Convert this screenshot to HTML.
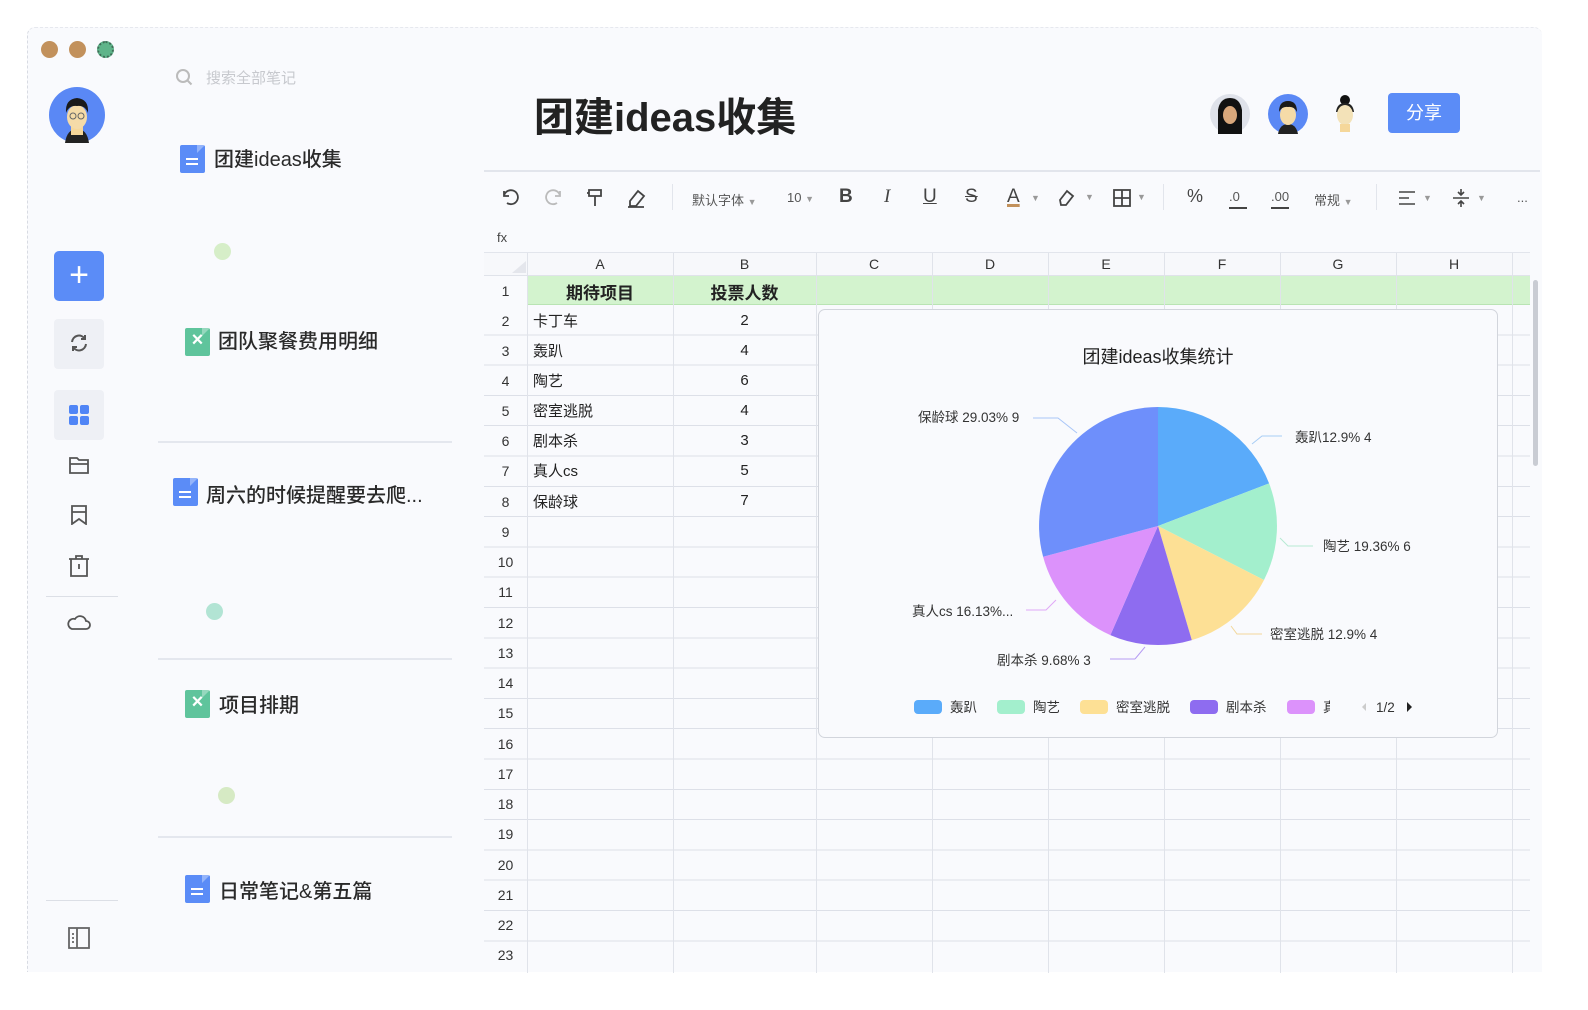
<!DOCTYPE html>
<html><head><meta charset="utf-8"><style>
*{margin:0;padding:0;box-sizing:border-box}
body{width:1588px;height:1010px;background:#fff;font-family:"Liberation Sans","Noto Sans CJK SC",sans-serif;color:#222;position:relative;overflow:hidden}
.win{position:absolute;left:27px;top:27px;width:1515px;height:945px;background:#f9fafd;border-left:1px dashed #d8dbe2;border-top:1px dashed #e6e8ee;border-radius:8px 8px 0 0}
.a{position:absolute}
.dot{position:absolute;width:17px;height:17px;border-radius:50%}
.note{position:absolute;font-size:20px;color:#2a2a2a;font-weight:500;white-space:nowrap}
.sep{position:absolute;left:158px;width:294px;height:2px;background:#e4e7ee}
.ic{position:absolute;width:25px;height:28px;border-radius:2px}
.ic .f{position:absolute;right:0;top:0;width:0;height:0;border-left:8px solid rgba(255,255,255,.35);border-bottom:8px solid transparent}
.cell{position:absolute;font-size:15px;color:#222;white-space:nowrap}
.rn{position:absolute;left:484px;width:43px;text-align:center;font-size:14px;color:#333}
.ch{position:absolute;top:256px;font-size:14px;color:#333;text-align:center}
.tb{position:absolute;top:186px;font-size:19px;color:#444}
.small{font-size:13px;color:#555}
</style></head><body>
<div class="win"></div>
<div class="dot" style="left:41px;top:41px;background:#c2915c"></div>
<div class="dot" style="left:69px;top:41px;background:#c2915c"></div>
<div class="dot" style="left:97px;top:41px;background:#5fb48a;border:2px dotted #3e6d57"></div>
<svg class="a" style="left:49px;top:87px" width="56" height="56" viewBox="0 0 56 56"><circle cx="28" cy="28" r="28" fill="#5a88f5"/><path d="M16 56 Q18 42 28 42 Q38 42 40 56Z" fill="#222"/><rect x="22" y="38" width="12" height="10" fill="#f5d79a"/><ellipse cx="28" cy="30" rx="10" ry="12" fill="#f5dba8"/><path d="M17 26 Q16 12 28 11 Q40 12 39 26 Q36 18 28 19 Q20 18 17 26Z" fill="#1a1a1a"/><circle cx="24" cy="29" r="3" fill="none" stroke="#666"/><circle cx="32" cy="29" r="3" fill="none" stroke="#666"/></svg>
<div class="a" style="left:54px;top:251px;width:50px;height:50px;background:#5b8cf7;border-radius:5px;color:#fff;font-size:34px;line-height:48px;text-align:center;font-weight:300">+</div>
<div class="a" style="left:54px;top:319px;width:50px;height:50px;background:#eef0f5;border-radius:4px"></div>
<svg class="a" style="left:68px;top:332px" width="22" height="22" viewBox="0 0 22 22" fill="none" stroke="#555" stroke-width="2"><path d="M4 10 A7 7 0 0 1 17 7 M18 12 A7 7 0 0 1 5 15"/><path d="M17 3 v4 h-4 M5 19 v-4 h4"/></svg>
<div class="a" style="left:54px;top:390px;width:50px;height:50px;background:#eef0f5;border-radius:4px"></div>
<svg class="a" style="left:69px;top:405px" width="20" height="20"><rect x="0" y="0" width="9" height="9" rx="2" fill="#4f85f6"/><rect x="11" y="0" width="9" height="9" rx="2" fill="#4f85f6"/><rect x="0" y="11" width="9" height="9" rx="2" fill="#4f85f6"/><rect x="11" y="11" width="9" height="9" rx="2" fill="#4f85f6"/></svg>
<svg class="a" style="left:69px;top:456px" width="20" height="18" fill="none" stroke="#555" stroke-width="1.8"><path d="M1 2 h7 l2 2 h9 v13 h-18z M1 8 h18"/></svg>
<svg class="a" style="left:71px;top:505px" width="16" height="20" fill="none" stroke="#555" stroke-width="1.8"><path d="M1 1 h14 v18 l-7 -5 l-7 5z M1 7 h14"/></svg>
<svg class="a" style="left:68px;top:555px" width="22" height="22" fill="none" stroke="#555" stroke-width="1.8"><path d="M1 4 h20 M8 4 v-3 h6 v3 M3 4 v17 h16 v-17 M11 9 v5"/></svg>
<div class="a" style="left:46px;top:596px;width:72px;height:1px;background:#dcdfe6"></div>
<svg class="a" style="left:67px;top:613px" width="24" height="18" fill="none" stroke="#555" stroke-width="1.8"><path d="M5 16 h14 a4 4 0 0 0 0 -8 a6 6 0 0 0 -11 -2 a5 5 0 0 0 -3 10z"/></svg>
<div class="a" style="left:46px;top:900px;width:72px;height:1px;background:#dcdfe6"></div>
<svg class="a" style="left:68px;top:927px" width="22" height="22" fill="none" stroke="#666" stroke-width="1.8"><rect x="1" y="1" width="20" height="20"/><path d="M9 1 v20 M4 7 h2 M4 11 h2 M4 15 h2"/></svg>
<svg class="a" style="left:176px;top:69px" width="17" height="17" fill="none" stroke="#bbb" stroke-width="2"><circle cx="7" cy="7" r="6"/><path d="M11.5 11.5 l4 4"/></svg>
<div class="a" style="left:206px;top:67px;font-size:15px;color:#c7c9ce">搜索全部笔记</div>
<div class="ic" style="left:180px;top:145px;background:#5b8cf7"><div class="f"></div><div class="a" style="left:6px;top:13px;width:12px;height:2px;background:#fff"></div><div class="a" style="left:6px;top:18px;width:12px;height:2px;background:#fff"></div></div>
<div class="note" style="left:214px;top:143px">团建ideas收集</div>
<div class="dot" style="left:214px;top:243px;background:#d6eec8"></div>
<div class="ic" style="left:185px;top:328px;background:#5fc49c"><div class="f"></div><div class="a" style="left:0;top:1px;width:25px;text-align:center;color:#fff;font-size:20px;font-weight:bold">×</div></div>
<div class="note" style="left:218px;top:325px">团队聚餐费用明细</div>
<div class="sep" style="top:441px"></div>
<div class="ic" style="left:173px;top:478px;background:#5b8cf7"><div class="f"></div><div class="a" style="left:6px;top:13px;width:12px;height:2px;background:#fff"></div><div class="a" style="left:6px;top:18px;width:12px;height:2px;background:#fff"></div></div>
<div class="note" style="left:206px;top:479px">周六的时候提醒要去爬...</div>
<div class="dot" style="left:206px;top:603px;background:#b2e4d4"></div>
<div class="sep" style="top:658px"></div>
<div class="ic" style="left:185px;top:690px;background:#5fc49c"><div class="f"></div><div class="a" style="left:0;top:1px;width:25px;text-align:center;color:#fff;font-size:20px;font-weight:bold">×</div></div>
<div class="note" style="left:219px;top:689px">项目排期</div>
<div class="dot" style="left:218px;top:787px;background:#d6eac4"></div>
<div class="sep" style="top:836px"></div>
<div class="ic" style="left:185px;top:875px;background:#5b8cf7"><div class="f"></div><div class="a" style="left:6px;top:13px;width:12px;height:2px;background:#fff"></div><div class="a" style="left:6px;top:18px;width:12px;height:2px;background:#fff"></div></div>
<div class="note" style="left:219px;top:875px">日常笔记&amp;第五篇</div>
<div class="a" style="left:534px;top:85px;font-size:40px;font-weight:bold;color:#222">团建ideas收集</div>
<svg class="a" style="left:1210px;top:94px" width="40" height="40"><circle cx="20" cy="20" r="20" fill="#dfe2ea"/><path d="M8 40 V16 Q10 4 20 4 Q30 4 32 16 V40z" fill="#111"/><ellipse cx="20" cy="21" rx="7" ry="9" fill="#d9a77b"/></svg>
<svg class="a" style="left:1268px;top:94px" width="40" height="40"><circle cx="20" cy="20" r="20" fill="#5a88f5"/><path d="M10 40 Q12 30 20 30 Q28 30 30 40z" fill="#222"/><ellipse cx="20" cy="21" rx="8" ry="10" fill="#f5dba8"/><path d="M11 18 Q11 7 20 7 Q29 7 29 18 Q26 12 20 13 Q14 12 11 18z" fill="#1a1a1a"/></svg>
<svg class="a" style="left:1325px;top:94px" width="40" height="40"><circle cx="20" cy="6" r="5" fill="#111"/><path d="M11 18 Q12 9 20 9 Q28 9 29 18z" fill="#222"/><ellipse cx="20" cy="21" rx="8" ry="10" fill="#f3e2b8"/><rect x="15" y="30" width="10" height="8" fill="#f5d79a"/></svg>
<div class="a" style="left:1388px;top:93px;width:72px;height:40px;background:#5b8cf7;border-radius:4px;color:#fff;font-size:18px;text-align:center;line-height:40px">分享</div>
<div class="a" style="left:484px;top:170px;width:1056px;height:2px;background:#e2e5ec"></div>
<svg class="a" style="left:500px;top:187px" width="160" height="22" fill="none" stroke="#444" stroke-width="1.8"><path d="M4 4 v5 h5 M4 9 a7 7 0 1 1 3 7"/><path d="M60 4 v5 h-5 M60 9 a7 7 0 1 0 -3 7" stroke="#bbb"/><path d="M89 3 h12 v6 h-12z M95 9 v10 M89 6 h-2"/><path d="M130 14 l8 -10 l6 5 l-8 10 h-6z M128 20 h16"/></svg>
<div class="a" style="left:672px;top:184px;width:1px;height:26px;background:#e2e5ec"></div>
<div class="tb small" style="left:692px;top:190px">默认字体 <span style="font-size:9px;color:#999">▼</span></div>
<div class="tb small" style="left:787px;top:190px">10 <span style="font-size:9px;color:#999">▼</span></div>
<div class="tb" style="left:839px;font-weight:bold">B</div>
<div class="tb" style="left:884px;font-style:italic;font-family:'Liberation Serif',serif">I</div>
<div class="tb" style="left:923px;text-decoration:underline">U</div>
<div class="tb" style="left:965px;text-decoration:line-through">S</div>
<div class="tb" style="left:1007px;text-decoration:underline;text-decoration-color:#c2915c;text-decoration-thickness:3px">A</div><div class="a" style="left:1031px;top:193px;font-size:9px;color:#999">▼</div>
<svg class="a" style="left:1057px;top:188px" width="40" height="20" fill="none" stroke="#444" stroke-width="1.8"><path d="M3 12 l7 -9 l6 5 l-7 9 h-5z"/><text x="28" y="12" font-size="9" fill="#999" stroke="none">▼</text></svg>
<svg class="a" style="left:1112px;top:188px" width="40" height="20" fill="none" stroke="#444" stroke-width="1.8"><rect x="2" y="2" width="16" height="16"/><path d="M10 2 v16 M2 10 h16"/><text x="25" y="12" font-size="9" fill="#999" stroke="none">▼</text></svg>
<div class="a" style="left:1163px;top:184px;width:1px;height:26px;background:#e2e5ec"></div>
<div class="tb" style="left:1187px;font-size:18px">%</div>
<div class="tb small" style="left:1229px;top:189px;font-size:13px">.0</div><div class="a" style="left:1229px;top:207px;width:18px;height:1.5px;background:#444"></div>
<div class="tb small" style="left:1271px;top:189px;font-size:13px">.00</div><div class="a" style="left:1271px;top:207px;width:18px;height:1.5px;background:#444"></div>
<div class="tb small" style="left:1314px;top:190px">常规 <span style="font-size:9px;color:#999">▼</span></div>
<div class="a" style="left:1376px;top:184px;width:1px;height:26px;background:#e2e5ec"></div>
<svg class="a" style="left:1398px;top:189px" width="40" height="18" fill="none" stroke="#444" stroke-width="1.6"><path d="M1 3 h16 M1 9 h10 M1 15 h16"/><text x="25" y="12" font-size="9" fill="#999" stroke="none">▼</text></svg>
<svg class="a" style="left:1452px;top:187px" width="40" height="22" fill="none" stroke="#444" stroke-width="1.6"><path d="M1 11 h16 M9 2 v6 M6 5 l3 3 l3 -3 M9 20 v-6 M6 17 l3 -3 l3 3"/><text x="25" y="14" font-size="9" fill="#999" stroke="none">▼</text></svg>
<div class="a" style="left:1517px;top:190px;font-size:13px;color:#555">...</div>
<div class="a" style="left:497px;top:230px;font-size:13px;color:#444">fx</div>
<div class="a" style="left:484px;top:252px;width:1046px;height:1px;background:#e2e5ec"></div>
<div class="a" style="left:484px;top:253px;width:1046px;height:22px;background:#f7f8fb"></div>
<div class="a" style="left:527px;top:276px;width:1003px;height:29px;background:#d3f3ce;border-bottom:1px solid #b9e4b3"></div>
<div class="a" style="left:484px;top:305px;width:1046px;height:665px;background-image:repeating-linear-gradient(to bottom,transparent 0,transparent 29.3px,#dde0e8 29.3px,#dde0e8 30.3px)"></div>
<svg class="a" style="left:484px;top:253px" width="1046" height="720">
<g stroke="#e0e3ea" stroke-width="1">
<line x1="43.5" y1="0" x2="43.5" y2="720"/><line x1="189.5" y1="0" x2="189.5" y2="720"/><line x1="332.5" y1="0" x2="332.5" y2="720"/><line x1="448.5" y1="0" x2="448.5" y2="720"/><line x1="564.5" y1="0" x2="564.5" y2="720"/><line x1="680.5" y1="0" x2="680.5" y2="720"/><line x1="796.5" y1="0" x2="796.5" y2="720"/><line x1="912.5" y1="0" x2="912.5" y2="720"/><line x1="1028.5" y1="0" x2="1028.5" y2="720"/>
<line x1="0" y1="22.5" x2="1046" y2="22.5"/>
</g><path d="M28 20 l14 -12 v12z" fill="#e4e6ec"/></svg>
<div class="ch" style="left:527px;width:146px">A</div><div class="ch" style="left:673px;width:143px">B</div><div class="ch" style="left:816px;width:116px">C</div><div class="ch" style="left:932px;width:116px">D</div><div class="ch" style="left:1048px;width:116px">E</div><div class="ch" style="left:1164px;width:116px">F</div><div class="ch" style="left:1280px;width:116px">G</div><div class="ch" style="left:1396px;width:116px">H</div>
<div class="rn" style="top:283px">1</div><div class="rn" style="top:313px">2</div><div class="rn" style="top:343px">3</div><div class="rn" style="top:373px">4</div><div class="rn" style="top:403px">5</div><div class="rn" style="top:433px">6</div><div class="rn" style="top:463px">7</div><div class="rn" style="top:494px">8</div><div class="rn" style="top:524px">9</div><div class="rn" style="top:554px">10</div><div class="rn" style="top:584px">11</div><div class="rn" style="top:615px">12</div><div class="rn" style="top:645px">13</div><div class="rn" style="top:675px">14</div><div class="rn" style="top:705px">15</div><div class="rn" style="top:736px">16</div><div class="rn" style="top:766px">17</div><div class="rn" style="top:796px">18</div><div class="rn" style="top:826px">19</div><div class="rn" style="top:857px">20</div><div class="rn" style="top:887px">21</div><div class="rn" style="top:917px">22</div><div class="rn" style="top:947px">23</div>
<div class="cell" style="left:527px;width:146px;text-align:center;top:279px;font-size:17px;font-weight:bold">期待项目</div>
<div class="cell" style="left:673px;width:143px;text-align:center;top:279px;font-size:17px;font-weight:bold">投票人数</div>
<div class="cell" style="left:533px;top:310px">卡丁车</div><div class="cell" style="left:673px;width:143px;text-align:center;top:312px">2</div>
<div class="cell" style="left:533px;top:340px">轰趴</div><div class="cell" style="left:673px;width:143px;text-align:center;top:342px">4</div>
<div class="cell" style="left:533px;top:370px">陶艺</div><div class="cell" style="left:673px;width:143px;text-align:center;top:372px">6</div>
<div class="cell" style="left:533px;top:400px">密室逃脱</div><div class="cell" style="left:673px;width:143px;text-align:center;top:402px">4</div>
<div class="cell" style="left:533px;top:430px">剧本杀</div><div class="cell" style="left:673px;width:143px;text-align:center;top:432px">3</div>
<div class="cell" style="left:533px;top:460px">真人cs</div><div class="cell" style="left:673px;width:143px;text-align:center;top:462px">5</div>
<div class="cell" style="left:533px;top:491px">保龄球</div><div class="cell" style="left:673px;width:143px;text-align:center;top:492px">7</div>
<div class="a" style="left:1533px;top:280px;width:5px;height:186px;background:#c9ccd3;border-radius:3px"></div>
<div class="a" style="left:818px;top:309px;width:680px;height:429px;background:#f9fafd;border:1px solid #d2d5dc;border-radius:7px"></div>
<svg class="a" style="left:0;top:0" width="1588" height="1010" font-family="Liberation Sans,Noto Sans CJK SC,sans-serif">
<path d="M1158 526 L1158 407 A119 119 0 0 1 1269.1 483.4Z" fill="#5aabfa"/>
<path d="M1158 526 L1269.1 483.4 A119 119 0 0 1 1264 580Z" fill="#a3efcd"/>
<path d="M1158 526 L1264 580 A119 119 0 0 1 1191.8 640.1Z" fill="#fde095"/>
<path d="M1158 526 L1191.8 640.1 A119 119 0 0 1 1110.4 635.1Z" fill="#8e6cf0"/>
<path d="M1158 526 L1110.4 635.1 A119 119 0 0 1 1043.1 556.8Z" fill="#dc92fb"/>
<path d="M1158 526 L1043.1 556.8 A119 119 0 0 1 1158 407Z" fill="#6e8ffb"/>
<g fill="none" stroke-width="1"><path d="M1033 418 h25 l19 15" stroke="#a9c6f8"/><path d="M1282 436 h-20 l-10 8" stroke="#a8cdf5"/><path d="M1313 546 h-25 l-8 -8" stroke="#b7ead4"/><path d="M1262 634 h-25 l-6 -8" stroke="#f2d79a"/><path d="M1135 659 h-25 M1135 659 l10 -12" stroke="#b69cf3"/><path d="M1026 610 h20 l10 -10" stroke="#e0a8f7"/></g>
<text x="1158" y="363" font-size="18" text-anchor="middle" fill="#222">团建ideas收集统计</text>
<g font-size="13.5" fill="#333">
<text x="918" y="422">保龄球 29.03% 9</text>
<text x="1295" y="442">轰趴12.9% 4</text>
<text x="1323" y="551">陶艺 19.36% 6</text>
<text x="1270" y="639">密室逃脱 12.9% 4</text>
<text x="997" y="665">剧本杀 9.68% 3</text>
<text x="912" y="616">真人cs 16.13%...</text>
</g>
<g font-size="13.5" fill="#333">
<rect x="914" y="700" width="28" height="14" rx="4" fill="#5aabfa"/><text x="950" y="712">轰趴</text>
<rect x="997" y="700" width="28" height="14" rx="4" fill="#a3efcd"/><text x="1033" y="712">陶艺</text>
<rect x="1080" y="700" width="28" height="14" rx="4" fill="#fde095"/><text x="1116" y="712">密室逃脱</text>
<rect x="1190" y="700" width="28" height="14" rx="4" fill="#8e6cf0"/><text x="1226" y="712">剧本杀</text>
<rect x="1287" y="700" width="28" height="14" rx="4" fill="#dc92fb"/><text x="1323" y="712">真</text>
<rect x="1330" y="698" width="14" height="18" fill="#f9fafd"/>
<path d="M1366 703 l-4 4 l4 4z" fill="#ccc"/><text x="1376" y="712">1/2</text><path d="M1407 702 l5 5 l-5 5z" fill="#222"/>
</g>
</svg>
</body></html>
